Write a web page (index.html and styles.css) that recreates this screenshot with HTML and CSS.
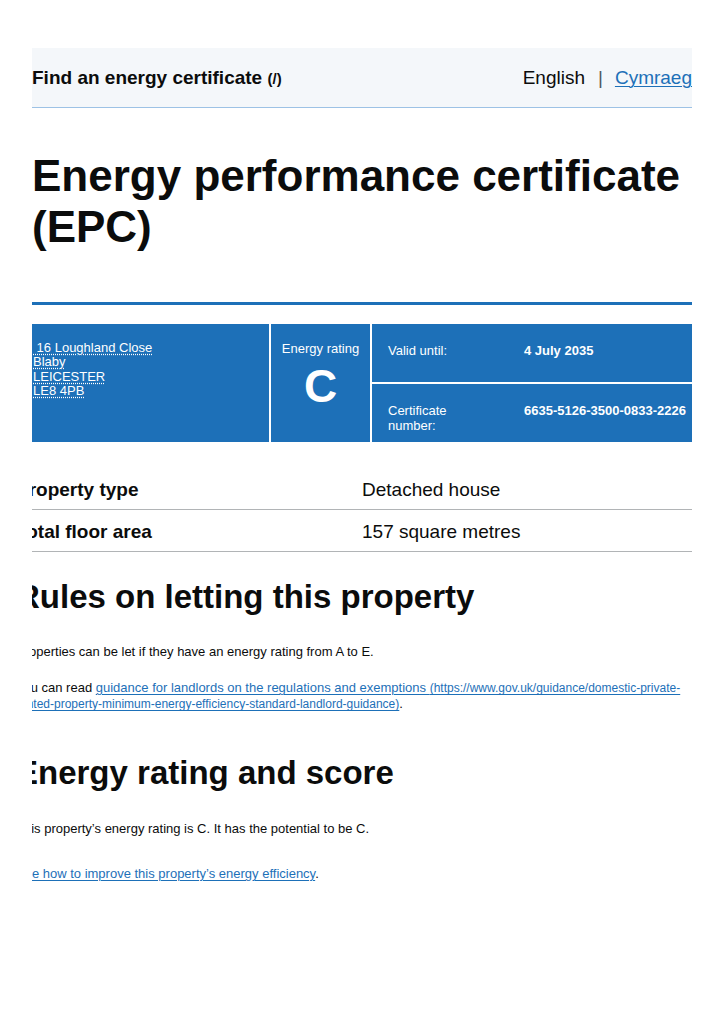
FILE: index.html
```html
<!DOCTYPE html>
<html lang="en">
<head>
<meta charset="utf-8">
<title>Energy performance certificate (EPC)</title>
<link rel="stylesheet" href="styles.css">
</head>
<body>
<div class="page">
  <header class="header">
    <div class="service"><a class="service-link" href="/">Find an energy certificate</a> <span class="href">(/)</span></div>
    <div class="lang"><span>English</span><span class="sep">|</span><a class="link" href="#">Cymraeg</a></div>
  </header>

  <h1 class="title">Energy performance certificate (EPC)</h1>
  <hr class="rule">

  <div class="summary">
    <div class="cell address">
      <span class="addr">&nbsp;16 Loughland Close</span><br>
      <span class="addr">Blaby</span><br>
      <span class="addr">LEICESTER</span><br>
      <span class="addr">LE8 4PB</span>
    </div>
    <div class="cell rating">
      <div class="rating-label">Energy rating</div>
      <div class="rating-letter">C</div>
    </div>
    <div class="side">
      <div class="cell meta">
        <div class="meta-label">Valid until:</div>
        <div class="meta-value">4 July 2035</div>
      </div>
      <div class="cell meta">
        <div class="meta-label">Certificate number:</div>
        <div class="meta-value">6635-5126-3500-0833-2226</div>
      </div>
    </div>
  </div>

  <div class="shifted">
    <dl class="facts">
      <div class="fact first"><dt>Property type</dt><dd>Detached house</dd></div>
      <div class="fact"><dt>Total floor area</dt><dd>157 square metres</dd></div>
    </dl>

    <h2 class="heading h-rules">Rules on letting this property</h2>
    <p class="body p1">Properties can be let if they have an energy rating from A to E.</p>
    <p class="body p2">You can read <a class="link" href="#">guidance for landlords on the regulations and exemptions <span class="url">(https://www.gov.uk/guidance/domestic-private-rented-property-minimum-energy-efficiency-standard-landlord-guidance)</span></a>.</p>

    <h2 class="heading h-score">Energy rating and score</h2>
    <p class="body p3">This property’s energy rating is C. It has the potential to be C.</p>
    <p class="body p4"><a class="link" href="#">See how to improve this property’s energy efficiency</a>.</p>
  </div>
</div>
</body>
</html>
```

FILE: styles.css
```css
* { box-sizing: border-box; }

html, body {
  margin: 0;
  padding: 0;
  background: #ffffff;
}

body {
  font-family: "Liberation Sans", Arial, sans-serif;
  color: #0b0c0c;
}

.page {
  margin: 48px 0 0 32px;
  width: 660px;
  overflow: hidden;
  padding-bottom: 120px;
}

/* Header */
.header {
  height: 60px;
  background: #f4f7fa;
  border-bottom: 1px solid #9dc2e5;
  display: flex;
  align-items: center;
  justify-content: space-between;
  font-size: 19px;
  line-height: 25px;
}

.service-link {
  font-weight: bold;
  color: #0b0c0c;
  text-decoration: none;
}

.href {
  font-weight: bold;
  font-size: 15px;
}

.lang {
  display: flex;
  align-items: center;
}

.sep {
  margin: 0 12px 0 13px;
  color: #505a5f;
}

.link {
  color: #1d70b8;
  text-decoration: underline;
  text-underline-offset: 2px;
  text-decoration-thickness: 1px;
}

/* Title */
.title {
  margin: 42px 0 0;
  font-size: 44px;
  line-height: 51px;
  font-weight: bold;
}

.rule {
  margin: 50px 0 0;
  border: 0;
  height: 3px;
  background: #1d70b8;
}

/* Summary boxes */
.summary {
  margin-top: 19px;
  display: grid;
  grid-template-columns: 237px 99px 320px;
  column-gap: 2px;
  height: 118px;
  color: #ffffff;
  font-size: 13px;
}

.cell {
  background: #1d70b8;
}

.address {
  padding: 17px 0 0 1px;
  line-height: 14.3px;
}

.addr {
  text-decoration: underline dotted #ffffff;
  text-underline-offset: 2px;
}

.rating {
  padding-top: 17px;
  text-align: center;
}

.rating-label {
  line-height: 15px;
}

.rating-letter {
  margin-top: 7px;
  font-size: 46px;
  line-height: 46px;
  font-weight: bold;
}

.side {
  display: grid;
  grid-template-rows: 58px 58px;
  row-gap: 2px;
}

.meta {
  padding: 19px 0 0 16px;
  display: grid;
  grid-template-columns: 100px 1fr;
  column-gap: 36px;
  line-height: 15px;
}

.meta-value {
  font-weight: bold;
  white-space: nowrap;
}

/* Shifted content */
.shifted {
  margin-left: -16px;
  width: 676px;
}

.facts {
  margin: 26px 0 0;
}

.fact {
  display: grid;
  grid-template-columns: 346px 1fr;
  padding: 9px 0 7px;
  border-bottom: 1px solid #b1b4b6;
  font-size: 19px;
  line-height: 25px;
}

.fact dt {
  font-weight: bold;
}

.fact dd {
  margin: 0;
}

.heading {
  margin: 0;
  font-size: 33px;
  line-height: 38px;
  font-weight: bold;
}

.h-rules { margin-top: 26px; }
.h-score { margin-top: 42px; }

.body {
  margin: 0;
  font-size: 13px;
  line-height: 15px;
}

.p1 { margin-top: 28px; }
.p2 { margin-top: 21px; }
.p3 { margin-top: 29px; }
.p4 { margin-top: 30px; }

.url {
  font-size: 12px;
}
```
